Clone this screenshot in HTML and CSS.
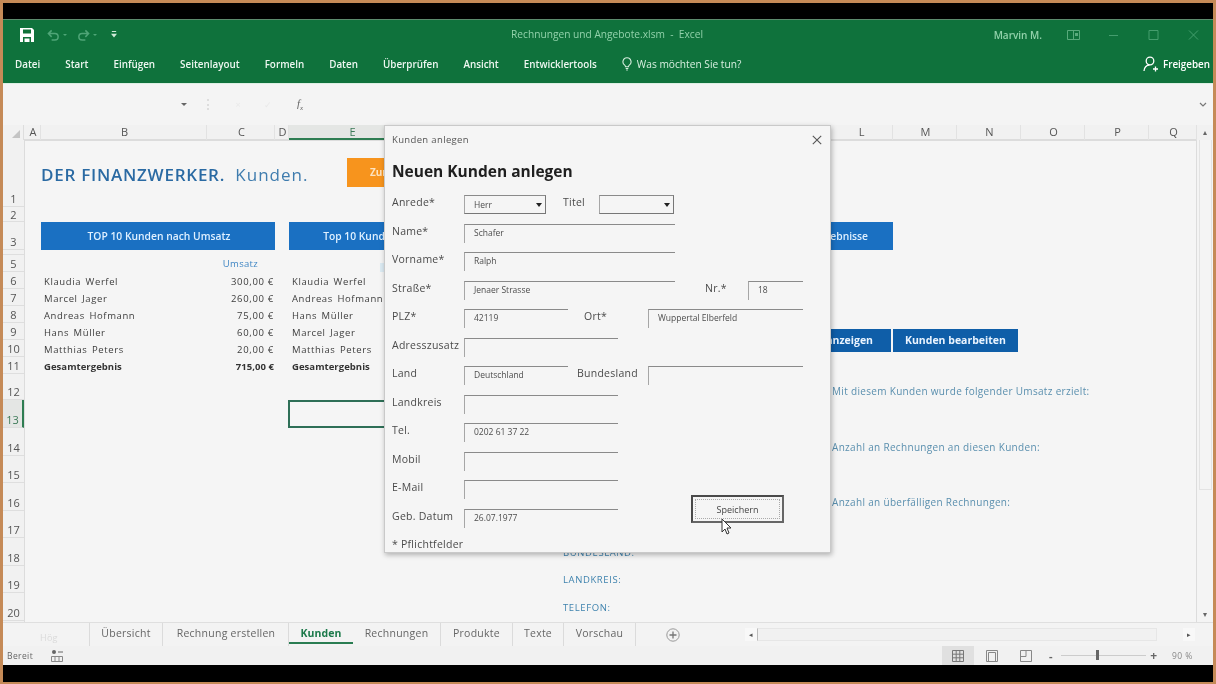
FILE: index.html
```html
<!DOCTYPE html>
<html lang="de">
<head>
<meta charset="utf-8">
<title>Rechnungen und Angebote.xlsm - Excel</title>
<link rel="stylesheet" href="styles.css">
</head>
<body>
<div class="app">
  <div class="letterbox"></div>

  <header class="ribbon">
    <div class="titlebar">
      <div class="qat">
        <svg class="ic-save" viewBox="0 0 14 14"><path fill="#fff" d="M0 0h12l2 2v12H0z"/><path fill="#107239" d="M3 1.500h8v4H3zM3 9h8v5h-1.500v-3.500h-5V14H3z"/></svg>
        <svg class="ic-undo" viewBox="0 0 14 12"><path fill="none" stroke="#4fa577" stroke-width="1.600" d="M5 1 1.500 4.500 5 8M2 4.500h6.500a3.500 3.500 0 0 1 0 7H5"/></svg>
        <span class="qat-drop"></span>
        <svg class="ic-redo" viewBox="0 0 14 12"><path fill="none" stroke="#4fa577" stroke-width="1.600" d="M9 1l3.500 3.500L9 8M12 4.500H5.500a3.500 3.500 0 0 0 0 7H9"/></svg>
        <span class="qat-drop"></span>
        <svg class="ic-cust" viewBox="0 0 7 8"><path fill="#cfe8d8" d="M1 0h5v1H1zM0 3h7L3.500 7.500z"/></svg>
      </div>
      <div class="doc-title">Rechnungen und Angebote.xlsm &nbsp;-&nbsp; Excel</div>
      <div class="win">
        <span class="user">Marvin M.</span>
        <svg class="ic-win" viewBox="0 0 13 10"><path fill="none" stroke="#67b488" d="M.5.5h12v9H.5zM6.500.5v9"/><path fill="#67b488" d="M8 3h3v3H8z"/></svg>
        <svg class="ic-win" viewBox="0 0 13 10"><path stroke="#4fa577" d="M2 5.500h9"/></svg>
        <svg class="ic-win" viewBox="0 0 13 10"><path fill="none" stroke="#4fa577" d="M2 .5h9v9H2z"/></svg>
        <svg class="ic-win" viewBox="0 0 13 10"><path fill="none" stroke="#4fa577" d="M2 .5l9 9M11 .5l-9 9"/></svg>
      </div>
    </div>
    <nav class="tabsbar">
      <span class="rtab">Datei</span>
      <span class="rtab">Start</span>
      <span class="rtab">Einfügen</span>
      <span class="rtab">Seitenlayout</span>
      <span class="rtab">Formeln</span>
      <span class="rtab">Daten</span>
      <span class="rtab">Überprüfen</span>
      <span class="rtab">Ansicht</span>
      <span class="rtab">Entwicklertools</span>
      <span class="tell">
        <svg class="ic-bulb" viewBox="0 0 10 14"><path fill="none" stroke="#d8efe0" stroke-width="1.100" d="M5 .8a4 4 0 0 0-2.300 7.300c.5.400.8 1 .8 1.600h3c0-.6.300-1.200.8-1.600A4 4 0 0 0 5 .8zM3.700 11.500h2.600M4.200 13h1.600"/></svg>
        Was möchten Sie tun?
      </span>
      <span class="share">
        <svg class="ic-person" viewBox="0 0 15 16"><circle cx="7" cy="5" r="3.800" fill="none" stroke="#fff" stroke-width="1.300"/><path fill="none" stroke="#fff" stroke-width="1.300" d="M1 15c0-3.500 2.500-6 5.500-6M10 13h5M12.500 10.500v5"/></svg>
        Freigeben
      </span>
    </nav>
  </header>

  <div class="formula">
    <span class="name-drop"></span>
    <span class="dots"></span>
    <span class="fbtn fbtn-x">×</span>
    <span class="fbtn">✓</span>
    <span class="fx">f<sub>x</sub></span>
    <svg class="ic-chev" viewBox="0 0 8 5"><path fill="none" stroke="#777" stroke-width="1.200" d="M1 1l3 3 3-3"/></svg>
  </div>

  <div class="columns">
    <div class="corner"><span class="corner-tri"></span></div>
    <div class="col-letters">
      <span class="col">A</span><span class="col">B</span><span class="col">C</span><span class="col">D</span>
      <span class="col col-on">E</span><span class="col">F</span><span class="col">G</span>
      <span class="col">L</span><span class="col">M</span><span class="col">N</span><span class="col">O</span><span class="col">P</span><span class="col">Q</span>
    </div>
    <div class="scroll-up">▴</div>
  </div>

  <div class="sheet">
    <div class="row-nums">
      <span class="rn rn-1">1</span><span class="rn rn-2">2</span><span class="rn rn-3">3</span><span class="rn rn-4"></span>
      <span class="rn rn-5">5</span><span class="rn rn-6">6</span><span class="rn rn-6">7</span><span class="rn rn-6">8</span>
      <span class="rn rn-6">9</span><span class="rn rn-6">10</span><span class="rn rn-6">11</span><span class="rn rn-12">12</span>
      <span class="rn rn-13 rn-on">13</span><span class="rn rn-13">14</span><span class="rn rn-15">15</span><span class="rn rn-13">16</span>
      <span class="rn rn-15">17</span><span class="rn rn-13">18</span><span class="rn rn-15">19</span><span class="rn rn-13">20</span>
    </div>

    <div class="cells">
      <div class="page-title"><b>DER FINANZWERKER.</b> <span class="page-sub">Kunden.</span></div>
      <div class="orange-btn">Zurück</div>

      <div class="band band-1">TOP 10 Kunden nach Umsatz</div>
      <div class="band band-2">Top 10 Kunden nach Rechnungen</div>
      <div class="band band-3">Suchergebnisse</div>

      <div class="umsatz">Umsatz</div>
      <div class="tint"></div>

      <div class="name n6">Klaudia Werfel</div><div class="amt n6">300,00 €</div>
      <div class="name n7">Marcel Jager</div><div class="amt n7">260,00 €</div>
      <div class="name n8">Andreas Hofmann</div><div class="amt n8">75,00 €</div>
      <div class="name n9">Hans Müller</div><div class="amt n9">60,00 €</div>
      <div class="name n10">Matthias Peters</div><div class="amt n10">20,00 €</div>
      <div class="name total n11">Gesamtergebnis</div><div class="amt total n11">715,00 €</div>

      <div class="name e n6">Klaudia Werfel</div>
      <div class="name e n7">Andreas Hofmann</div>
      <div class="name e n8">Hans Müller</div>
      <div class="name e n9">Marcel Jager</div>
      <div class="name e n10">Matthias Peters</div>
      <div class="name e total n11">Gesamtergebnis</div>

      <div class="selected"></div>

      <div class="act act-show">Kunden anzeigen</div>
      <div class="act act-edit">Kunden bearbeiten</div>

      <div class="note n12">Mit diesem Kunden wurde folgender Umsatz erzielt:</div>
      <div class="note n14">Anzahl an Rechnungen an diesen Kunden:</div>
      <div class="note n16">Anzahl an überfälligen Rechnungen:</div>

      <div class="key n18">BUNDESLAND:</div>
      <div class="key n19">LANDKREIS:</div>
      <div class="key n20">TELEFON:</div>
    </div>

    <div class="vscroll">
      <div class="vthumb"></div>
      <div class="scroll-down">▾</div>
    </div>
  </div>

  <div class="tabs">
    <div class="tab-nav"><span class="tab-hint">Hög</span></div>
    <div class="tab t-uebersicht">Übersicht</div>
    <div class="tab t-rechnung">Rechnung erstellen</div>
    <div class="tab tab-on">Kunden</div>
    <div class="tab t-rechnungen">Rechnungen</div>
    <div class="tab t-produkte">Produkte</div>
    <div class="tab t-texte">Texte</div>
    <div class="tab t-vorschau">Vorschau</div>
    <svg class="ic-plus" viewBox="0 0 14 14"><circle cx="7" cy="7" r="6.200" fill="none" stroke="#999"/><path stroke="#777" stroke-width="1.300" d="M3.500 7h7M7 3.500v7"/></svg>
    <div class="hscroll">
      <span class="hbtn">◂</span>
      <span class="htrack"></span>
      <span class="hbtn hbtn-r">▸</span>
    </div>
  </div>

  <footer class="status">
    <span class="ready">Bereit</span>
    <svg class="ic-macro" viewBox="0 0 12 12"><circle cx="3" cy="2" r="2" fill="#666"/><path stroke="#666" d="M7 2h5"/><path fill="none" stroke="#888" d="M.5 6.500h11v5H.5zM4 6.500v5M8 6.500v5"/></svg>
    <div class="status-right">
      <span class="view view-on"><svg class="ic-view" viewBox="0 0 12 12"><path fill="none" stroke="#777" d="M.5.5h11v11H.5zM4.200.5v11M7.800.5v11M.5 4.200h11M.5 7.800h11"/></svg></span>
      <span class="view"><svg class="ic-view" viewBox="0 0 12 12"><path fill="none" stroke="#888" d="M.5.5h11v11H.5zM2.500 2.500h7v9h-7z"/></svg></span>
      <span class="view"><svg class="ic-view" viewBox="0 0 12 12"><path fill="none" stroke="#888" d="M.5.5h11v11H.5zM6 .5v6H.5"/></svg></span>
      <span class="zoom-minus">-</span>
      <span class="slider"><span class="slider-thumb"></span></span>
      <span class="zoom-plus">+</span>
      <span class="zoom-val">90 %</span>
    </div>
  </footer>
  <div class="letterbox letterbox-b"></div>

  <section class="dialog">
    <div class="dlg-head">
      <span>Kunden anlegen</span>
      <svg class="ic-close" viewBox="0 0 10 10"><path fill="none" stroke="#555" stroke-width="1.100" d="M.8.8l8.400 8.400M9.200.8 .8 9.200"/></svg>
    </div>
    <h2 class="dlg-title">Neuen Kunden anlegen</h2>
    <div class="form">
      <div class="row"><label class="lbl">Anrede*</label><span class="fld sel w-anrede">Herr<i class="arrow"></i></span><label class="lbl lbl-titel">Titel</label><span class="fld sel w-titel"><i class="arrow"></i></span></div>
      <div class="row"><label class="lbl">Name*</label><span class="fld w-long">Schafer</span></div>
      <div class="row"><label class="lbl">Vorname*</label><span class="fld w-long">Ralph</span></div>
      <div class="row"><label class="lbl">Straße*</label><span class="fld w-long">Jenaer Strasse</span><label class="lbl lbl-nr">Nr.*</label><span class="fld w-nr">18</span></div>
      <div class="row"><label class="lbl">PLZ*</label><span class="fld w-short">42119</span><label class="lbl lbl-ort">Ort*</label><span class="fld w-ort">Wuppertal Elberfeld</span></div>
      <div class="row"><label class="lbl">Adresszusatz</label><span class="fld w-mid"></span></div>
      <div class="row"><label class="lbl">Land</label><span class="fld w-short">Deutschland</span><label class="lbl lbl-bl">Bundesland</label><span class="fld w-bl"></span></div>
      <div class="row"><label class="lbl">Landkreis</label><span class="fld w-mid"></span></div>
      <div class="row"><label class="lbl">Tel.</label><span class="fld w-mid">0202 61 37 22</span></div>
      <div class="row"><label class="lbl">Mobil</label><span class="fld w-mid"></span></div>
      <div class="row"><label class="lbl">E-Mail</label><span class="fld w-mid"></span></div>
      <div class="row"><label class="lbl">Geb. Datum</label><span class="fld w-mid">26.07.1977</span>
        <div class="save"><span class="save-in">Speichern</span></div>
      </div>
      <div class="row row-last"><span class="lbl lbl-req">* Pflichtfelder</span></div>
    </div>
    <svg class="cursor" viewBox="0 0 12 18"><path fill="#fff" stroke="#333" stroke-width="1" d="M1 1v13l3-3 2 5 2-1-2-5h4z"/></svg>
  </section>
</div>
</body>
</html>
```

FILE: styles.css
```css
* { box-sizing: border-box; }
html, body { margin: 0; padding: 0; }
body { width: 1216px; height: 684px; overflow: hidden; background: #000; }

.app {
  --cols: 17px 166px 68px 14px 126px 148px 266px 64px 64px 64px 64px 64px 48px;
  position: relative;
  width: 1216px;
  height: 684px;
  border: solid #c58a57;
  border-width: 3px 3px 2px 3px;
  background: #f4f4f4;
  display: flex;
  flex-direction: column;
  font-family: "Open Sans", "Liberation Sans", sans-serif;
  color: #444;
  overflow: hidden;
  filter: blur(0.35px);
}

.letterbox { height: 16px; background: #000; flex: none; }
.letterbox-b { height: 17px; }

/* Ribbon */
.ribbon { height: 64px; flex: none; background: #0f723c; display: flex; flex-direction: column; border-top: 1px solid #5c8a6d; }
.titlebar { height: 29px; display: flex; align-items: center; position: relative; }
.qat { display: flex; align-items: center; padding-left: 17px; }
.ic-save { width: 14px; height: 14px; }
.ic-undo { width: 13px; height: 12px; margin-left: 13px; }
.ic-redo { width: 13px; height: 12px; margin-left: 10px; }
.qat-drop { width: 0; height: 0; margin-left: 3px; border: 2px solid transparent; border-top: 2px solid #4fa577; margin-top: 2px; }
.ic-cust { width: 6px; height: 7px; margin-left: 14px; }
.doc-title { position: absolute; left: 508px; top: 6px; font-size: 10.2px; line-height: 16px; color: #92d2ab; white-space: nowrap; }
.win { margin-left: auto; display: flex; align-items: center; padding-right: 13px; }
.user { font-size: 10px; color: #92d2ab; font-weight: 600; margin-right: 25px; }
.ic-win { width: 13px; height: 10px; margin-left: 27px; opacity: .85; }
.ic-win:first-of-type { margin-left: 0; }

.tabsbar { flex: 1; display: flex; align-items: center; padding: 0 0 4px 12px; gap: 25px; color: #eef7f1; font-size: 9.85px; font-weight: 600; white-space: nowrap; }
.rtab { display: block; }
.tell { display: flex; align-items: center; gap: 5px; font-size: 10.2px; font-weight: 400; color: #d8efe0; }
.ic-bulb { width: 10px; height: 14px; }
.share { display: flex; align-items: center; gap: 5px; margin-left: auto; margin-right: 3px; color: #fff; }
.ic-person { width: 15px; height: 16px; }

/* Formula bar */
.formula { height: 42px; flex: none; display: flex; align-items: center; position: relative; background: #f4f4f4; border-top: 1px solid #dcefe3; }
.name-drop { width: 0; height: 0; margin-left: 178px; border: 3px solid transparent; border-top: 3px solid #666; margin-top: 3px; }
.dots { width: 2px; height: 11px; margin-left: 20px; border-left: 2px dotted #ddd; }
.fbtn { width: 10px; margin-left: 20px; font-size: 9px; text-align: center; color: #e9e9e9; }
.fbtn-x { margin-left: 24px; }
.fx { margin-left: 24px; font: italic 11px "Liberation Serif", serif; color: #666; }
.fx sub { font-size: 7px; }
.ic-chev { width: 8px; height: 5px; margin-left: auto; margin-right: 6px; }

/* Column letters */
.columns { height: 15px; flex: none; display: flex; background: #f1f1f1; }
.corner { width: 21px; flex: none; position: relative; border-right: 1px solid #ddd; }
.corner-tri { position: absolute; right: 3px; bottom: 2px; width: 0; height: 0; border-left: 8px solid transparent; border-bottom: 8px solid #c4c4c4; }
.col-letters { display: grid; grid-template-columns: var(--cols); width: 1173px; border-bottom: 1px solid #dcdcdc; }
.col { font-size: 11px; line-height: 14px; padding-left: 2px; text-align: center; color: #555; border-right: 1px solid #e2e2e2; }
.col-on { background: #e4e6e4; color: #3c7a58; border-bottom: 2px solid #2e7d52; height: 15px; }
.scroll-up { width: 16px; flex: none; font-size: 8px; line-height: 14px; text-align: center; color: #666; }

/* Sheet */
.sheet { height: 482px; flex: none; display: flex; }
.row-nums { width: 21px; flex: none; display: flex; flex-direction: column; background: #f1f1f1; }
.rn { display: flex; justify-content: center; align-items: flex-end; border-bottom: 1px solid #dedede; font-size: 11px; line-height: 15px; color: #555; }
.rn-1 { height: 67px; }
.rn-2 { height: 15px; line-height: 13px; }
.rn-3 { height: 28px; }
.rn-4 { height: 5px; }
.rn-5, .rn-6 { height: 17px; }
.rn-12 { height: 26px; }
.rn-13 { height: 28px; }
.rn-15 { height: 27px; }
.rn-on { background: #e4e6e4; color: #3c7a58; border-right: 2px solid #2e7d52; }

.cells {
  width: 1173px;
  display: grid;
  grid-template-columns: var(--cols);
  grid-template-rows: 67px 15px 28px 5px 17px 17px 17px 17px 17px 17px 17px 26px 28px 28px 27px 28px 27px 28px 27px 28px;
  background: #f5f5f5;
  box-shadow: inset 1px 1px 0 #dcdcdc, inset -1px 0 0 #dcdcdc;
  overflow: hidden;
  font-size: 9.5px;
}

.page-title { grid-column: 2 / 5; grid-row: 1; align-self: start; margin-top: 21px; font-size: 17px; line-height: 28px; color: #2c6ea6; letter-spacing: 0.75px; white-space: nowrap; }
.page-title b { font-weight: 600; color: #2a6aa3; }
.page-sub { margin-left: 5px; letter-spacing: 1px; font-weight: 400; color: #3f7cae; }
.orange-btn { grid-column: 5 / 7; grid-row: 1; align-self: start; margin: 18px 0 0 58px; height: 29px; width: 100px; background: #f7941d; color: #fde3bf; font-weight: 700; font-size: 10px; line-height: 29px; padding-left: 23px; }

.band { grid-row: 3; background: #1a70c2; color: #dff0ff; font-weight: 600; font-size: 10.3px; display: flex; align-items: center; justify-content: center; white-space: nowrap; }
.band-1 { grid-column: 2 / 4; padding-left: 2px; }
.band-2 { grid-column: 5 / 7; width: 234px; }
.band-3 { grid-column: 7 / 9; justify-content: flex-end; padding-right: 25px; margin-left: 100px; }

.umsatz { grid-column: 3; grid-row: 5; font-size: 9.5px; line-height: 17px; color: #3f86c4; text-align: right; padding-right: 17px; letter-spacing: 0.3px; }
.tint { grid-column: 5; grid-row: 5; margin-left: 91px; width: 12px; height: 9px; align-self: end; background: #dcebf3; }

.name { grid-column: 2; padding: 2px 0 0 3px; line-height: 15px; letter-spacing: 0.6px; word-spacing: 1.5px; color: #3d3d3d; white-space: nowrap; font-size: 9.5px; }
.name.e { grid-column: 5; }
.amt { grid-column: 3; padding: 2px 1px 0 0; line-height: 15px; text-align: right; letter-spacing: 0.7px; color: #3d3d3d; white-space: nowrap; }
.total { font-weight: 700; letter-spacing: 0.05px; word-spacing: 0; color: #333; }
.n6 { grid-row: 6; } .n7 { grid-row: 7; } .n8 { grid-row: 8; } .n9 { grid-row: 9; } .n10 { grid-row: 10; } .n11 { grid-row: 11; }
.n12 { grid-row: 12; } .n14 { grid-row: 14; } .n16 { grid-row: 16; } .n18 { grid-row: 18; } .n19 { grid-row: 19; } .n20 { grid-row: 20; }

.selected { grid-column: 5; grid-row: 13; margin-left: -1px; border: 2px solid #2e6f57; }

.act { grid-row: 9 / 12; align-self: start; margin-top: 6px; height: 23px; background: #0f5ea8; color: #eaf4ff; font-weight: 700; font-size: 10.5px; line-height: 23px; white-space: nowrap; }
.act-show { grid-column: 7 / 9; justify-self: end; margin-right: 2px; padding: 0 18px; }
.act-edit { grid-column: 9 / 12; justify-self: start; padding: 0 12px; width: 125px; }

.note { grid-column: 8 / 14; align-self: end; padding-left: 3px; line-height: 17px; font-size: 10px; color: #5a8fae; letter-spacing: 0.32px; white-space: nowrap; }
.key { grid-column: 7; align-self: end; padding-bottom: 5px; line-height: 17px; font-size: 9.5px; color: #3f83ae; letter-spacing: 0.6px; }

.vscroll { width: 16px; flex: none; display: flex; flex-direction: column; align-items: center; }
.vthumb { width: 13px; height: 350px; border: 1px solid #e3e3e3; border-top: 0; }
.scroll-down { margin-top: auto; font-size: 8px; line-height: 12px; color: #666; padding-bottom: 2px; }

/* Sheet tabs */
.tabs { height: 24px; flex: none; display: flex; align-items: center; border-top: 1px solid #dfdfdf; background: #f3f3f3; font-size: 10.5px; letter-spacing: 0.25px; color: #666; }
.tab-nav { width: 87px; height: 100%; flex: none; border-right: 1px solid #dbdbdb; position: relative; }
.tab-hint { position: absolute; left: 37px; top: 8px; font-size: 9px; color: #dadada; }
.tab { flex: none; height: 100%; line-height: 21px; text-align: center; border-right: 1px solid #dbdbdb; white-space: nowrap; }
.t-uebersicht { width: 73px; }
.t-rechnung { width: 126px; padding-left: 1px; }
.t-rechnungen { width: 88px; }
.t-produkte { width: 72px; }
.t-texte { width: 51px; }
.t-vorschau { width: 72px; }
.tab-on { width: 64px; height: 21px; align-self: flex-start; color: #1d7a4b; font-weight: 700; border-bottom: 2px solid #2a7d52; border-right: 0; letter-spacing: 0.1px; }
.ic-plus { width: 14px; height: 14px; margin-left: 30px; flex: none; }
.hscroll { margin-left: 65px; display: flex; align-items: center; width: 451px; height: 13px; }
.hbtn { width: 12px; height: 13px; font-size: 7px; line-height: 13px; text-align: center; color: #555; flex: none; background: #f8f8f8; }
.htrack { width: 400px; height: 13px; flex: none; border: 1px solid #e6e6e6; border-left: 1px solid #bbb; background: #f1f1f1; }
.hbtn-r { margin-left: 26px; }

/* Status bar */
.status { height: 19px; flex: none; display: flex; align-items: center; background: #f1f1f1; font-size: 8.5px; color: #666; padding-left: 4px; letter-spacing: 0.4px; }
.ready { width: 44px; }
.ic-macro { width: 12px; height: 12px; }
.status-right { margin-left: auto; display: flex; align-items: center; height: 100%; padding-right: 17px; }
.view { width: 32px; height: 100%; margin-right: 2px; display: flex; align-items: center; justify-content: center; }
.view-on { background: #e0e0e0; }
.ic-view { width: 12px; height: 12px; }
.zoom-minus { width: 12px; margin-left: 1px; font-size: 11px; font-weight: 700; text-align: center; }
.slider { width: 85px; height: 1px; margin-left: 4px; background: #ccc; position: relative; }
.slider-thumb { position: absolute; left: 35px; top: -5px; width: 3px; height: 10px; background: #666; }
.zoom-plus { width: 12px; margin-left: 2px; font-size: 12px; font-weight: 700; text-align: center; }
.zoom-val { margin-left: 12px; width: 24px; white-space: nowrap; color: #888; }

/* Dialog */
.dialog { position: absolute; left: 381px; top: 122px; width: 447px; height: 428px; background: #f5f5f5; border: 1px solid #c9c9c9; box-shadow: 1px 2px 5px rgba(0, 0, 0, .28); padding: 0 0 0 7px; }
.dlg-head { height: 27px; display: flex; align-items: center; justify-content: space-between; padding-right: 8px; font-size: 9.5px; letter-spacing: 0.35px; color: #555; }
.ic-close { width: 10px; height: 10px; }
.dlg-title { margin: 0; height: 35px; font-size: 15.5px; line-height: 37px; font-weight: 700; color: #1f1f1f; }
.form { display: flex; flex-direction: column; }
.row { height: 28.5px; flex: none; display: flex; align-items: flex-start; }
.lbl { width: 72px; flex: none; font-size: 10.5px; line-height: 16px; margin-top: 6px; letter-spacing: 0.25px; color: #4a4a4a; white-space: nowrap; }
.lbl-titel { width: 36px; margin-left: 17px; }
.lbl-nr { width: 43px; margin-left: 30px; }
.lbl-ort { width: 64px; margin-left: 16px; }
.lbl-bl { width: 71px; margin-left: 9px; }
.lbl-req { width: auto; margin-top: 6px; }
.fld { display: block; flex: none; height: 19px; margin-top: 7px; padding: 1px 0 0 9px; border-top: 1px solid #8a8a8a; border-left: 1px solid #a6a6a6; font-size: 8.5px; line-height: 14px; color: #4d4d4d; white-space: nowrap; position: relative; }
.sel { border-right: 1px solid #777; border-bottom: 1px solid #777; padding-top: 2px; }
.arrow { position: absolute; right: 3px; top: 7px; width: 0; height: 0; border: 3px solid transparent; border-top: 4px solid #222; }
.w-anrede { width: 82px; }
.w-titel { width: 75px; }
.w-long { width: 211px; }
.w-nr { width: 55px; }
.w-short { width: 104px; }
.w-ort, .w-bl { width: 155px; }
.w-mid { width: 154px; }

.save { margin: -7px 0 0 73px; width: 93px; height: 28px; padding: 2px; border: 2px solid #555; border-color: #4a4a4a #666 #666 #4a4a4a; flex: none; }
.save-in { display: block; height: 100%; border: 1px dotted #aaa; font-size: 9px; line-height: 19px; text-align: center; color: #444; }
.cursor { position: absolute; left: 336px; top: 392px; width: 12px; height: 18px; }
```
